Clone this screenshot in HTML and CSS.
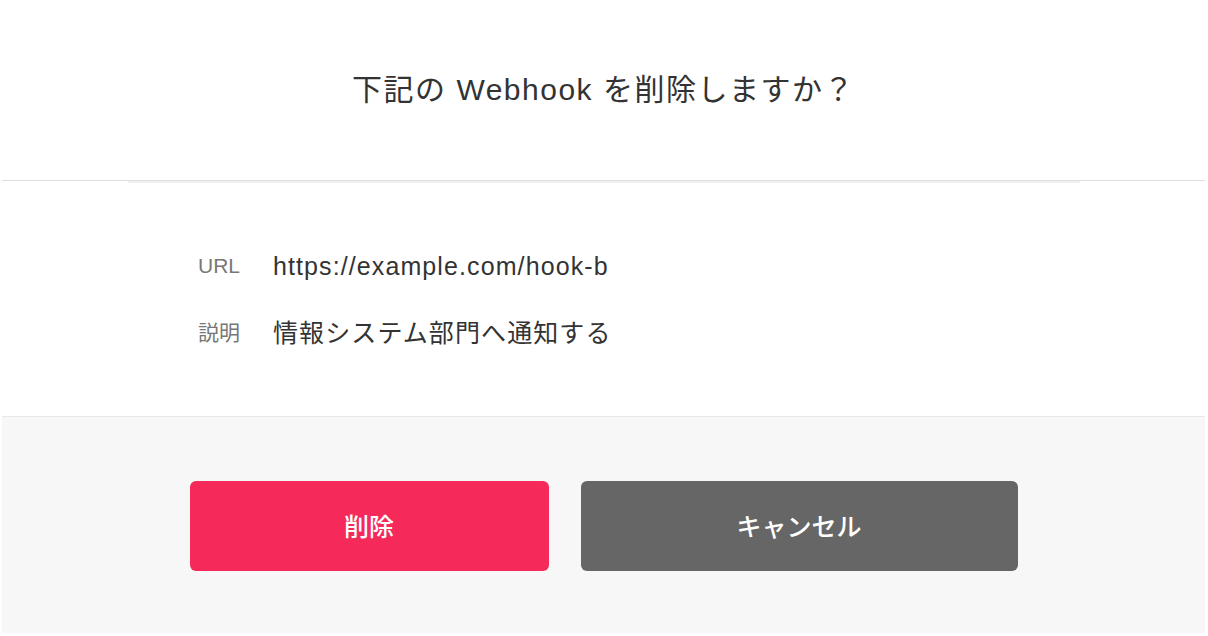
FILE: index.html
```html
<!DOCTYPE html>
<html lang="ja">
<head>
  <meta charset="UTF-8" />
  <title>Webhook の削除</title>
  <link rel="stylesheet" href="styles.css">
</head>
<body>
  <div class="modal">
    <div class="modal-header">
      <h2 class="modal-title">下記の Webhook を削除しますか？</h2>
    </div>

    <div class="modal-body">
      <dl class="detail-list">
        <dt>URL</dt>
        <dd>https://example.com/hook-b</dd>
        <dt>説明</dt>
        <dd>情報システム部門へ通知する</dd>
      </dl>
    </div>

    <div class="modal-footer">
      <button class="btn btn-delete">削除</button>
      <button class="btn btn-cancel">キャンセル</button>
    </div>
  </div>
</body>
</html>
```

FILE: styles.css
```css
body {
  margin: 0;
  background: #fff;
  font-family: "Liberation Sans", "Noto Sans CJK JP", sans-serif;
  color: #333;
}

.modal {
  width: 1203px;
  margin-left: 2px;
  background: #fff;
}

.modal-header {
  height: 181px;
  box-sizing: border-box;
  padding-bottom: 7px;
  border-bottom: 1px solid #dedede;
  display: flex;
  align-items: center;
  justify-content: center;
}

.modal-title {
  margin: 0;
  font-size: 30px;
  font-weight: normal;
  letter-spacing: 1.5px;
  color: #333;
}

.modal-body {
  margin: 0 125px 0 126px;
  border-top: 2px solid #f0f0f0;
  padding: 65px 70px;
}

.detail-list {
  margin: 0;
  display: grid;
  grid-template-columns: 75px auto;
  row-gap: 31px;
  align-items: center;
  line-height: 36px;
}

.detail-list dt {
  font-size: 21px;
  color: #777;
}

.detail-list dd {
  margin: 0;
  font-size: 25px;
  letter-spacing: 1.1px;
  color: #333;
}

.modal-footer {
  background: #f7f7f7;
  border-top: 1px solid #e8e8e8;
  display: flex;
  justify-content: center;
  gap: 32px;
  padding: 64px 0 62px;
}

.btn {
  height: 90px;
  padding-bottom: 3px;
  border: none;
  border-radius: 6px;
  color: #fff;
  font-family: inherit;
  font-size: 25px;
  font-weight: 500;
  cursor: pointer;
}

.btn-delete {
  width: 359px;
  background: #f5295a;
}

.btn-cancel {
  width: 437px;
  background: #666;
}
```
